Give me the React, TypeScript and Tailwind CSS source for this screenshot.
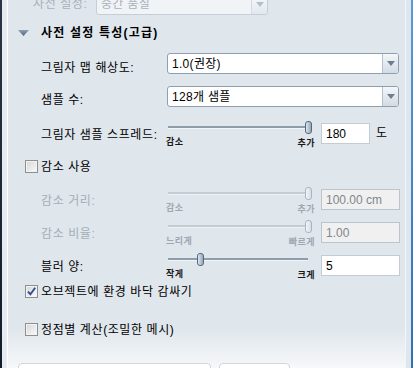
import React from "react";

// Mental ray "advanced preset properties" panel, Korean UI, Vista-ish chrome.

const FONT = "font-['Liberation_Sans','Noto_Sans_CJK_KR',sans-serif]";

function DropButton({ disabled }: { disabled?: boolean }) {
  return (
    <div
      className={
        "flex w-[16px] items-center justify-center rounded-r-[2px] border-l " +
        (disabled
          ? "border-[#d3dae1] bg-gradient-to-b from-[#f6f8fa] to-[#e3e8ed]"
          : "border-[#b3c0cd] bg-gradient-to-b from-[#f5f7f9] to-[#d3dbe3]")
      }
    >
      <svg width="8" height="5" viewBox="0 0 8 5">
        <path d="M0 0h8L4 5z" fill={disabled ? "#b4bfca" : "#6a7e94"} />
      </svg>
    </div>
  );
}

function Combo({ value, disabled, w }: { value: string; disabled?: boolean; w: string }) {
  return (
    <div
      className={
        "flex h-[21px] rounded-[3px] border " +
        w +
        (disabled ? " border-[#c4ced8] bg-[#f1f4f7] text-[#a9b1b9]" : " border-[#8d9fb3] bg-white")
      }
    >
      <div className="flex flex-1 items-center pl-[4px] leading-[14px] tracking-[0.3px]">{value}</div>
      <DropButton disabled={disabled} />
    </div>
  );
}

function Slider({
  pos,
  left,
  right,
  disabled,
}: {
  pos: number;
  left: string;
  right: string;
  disabled?: boolean;
}) {
  const thumbLeft = 2 + pos * 140 - 3.5;
  const tone = disabled ? "text-[#9fa8b0]" : "text-[#1a1a1a]";
  return (
    <div className="relative h-[26px] w-[150px] shrink-0">
      <div
        className={
          "absolute left-[2px] top-[5px] h-[3px] w-[140px] border-t-2 border-b " +
          (disabled ? "border-t-[#c5cdd4] border-b-[#eef2f5]" : "border-t-[#8e9dab] border-b-[#f2f5f7]")
        }
      />
      <div
        className={
          "absolute top-0 h-[13px] w-[7px] rounded-[3px] border " +
          (disabled
            ? "border-[#aab5c0] bg-gradient-to-r from-[#f2f5f7] to-[#d6dde4]"
            : "border-[#56687a] bg-gradient-to-r from-[#dfe8f0] to-[#93a6b9]")
        }
        style={{ left: thumbLeft }}
      />
      <div
        className={
          "absolute left-0 top-[16px] text-[9px] font-semibold leading-[10px] tracking-[0.5px] " + tone
        }
      >
        {left}
      </div>
      <div
        className={
          "absolute right-[1px] top-[17px] text-[9px] font-semibold leading-[10px] tracking-[0.5px] " + tone
        }
      >
        {right}
      </div>
    </div>
  );
}

function Field({ value, w, disabled }: { value: string; w: string; disabled?: boolean }) {
  return (
    <div
      className={
        "mt-[2px] flex h-[21px] items-center pl-[4px] leading-[14px] border " +
        w +
        (disabled ? " border-[#bcc4cc] bg-[#f0f0f0] text-[#7f868c]" : " border-[#c3ccd4] bg-white")
      }
    >
      {value}
    </div>
  );
}

function Check({ checked }: { checked?: boolean }) {
  return (
    <div className="flex h-[13px] w-[13px] shrink-0 items-center justify-center border border-[#8e8f8f] bg-gradient-to-br from-[#d6d6d6] to-[#fbfbfb] shadow-[inset_0_0_0_1px_#f3f3f3]">
      {checked ? (
        <svg width="11" height="11" viewBox="0 0 11 11">
          <path d="M2 5.6l2.4 2.6L9.2 1.8" fill="none" stroke="#2f4f8e" strokeWidth="1.9" />
        </svg>
      ) : null}
    </div>
  );
}

function SliderRow({
  label,
  pos,
  left,
  right,
  value,
  disabled,
  className,
}: {
  label: string;
  pos: number;
  left: string;
  right: string;
  value: string;
  disabled?: boolean;
  className: string;
}) {
  return (
    <div className={"flex h-[26px] " + className}>
      <div
        className={
          "w-[158px] shrink-0 pl-[33px] pt-[7px] leading-[14px] tracking-[0.6px] " +
          (disabled ? "text-[#a6aeb5]" : "")
        }
      >
        {label}
      </div>
      <Slider pos={pos} left={left} right={right} disabled={disabled} />
      <div className="ml-[5px]">
        <Field value={value} w="w-[79px]" disabled={disabled} />
      </div>
    </div>
  );
}

export default function App() {
  return (
    <div className={`flex h-[368px] w-[416px] overflow-hidden text-[12px] text-black ${FONT}`}>
      <div className="w-[2px] bg-gradient-to-b from-[#2b3646] to-[#141c28]" />
      <div className="w-[5px] bg-[#e5ebf0]" />
      <div className="w-[1px] bg-white" />

      <div className="flex w-[397px] flex-col bg-[linear-gradient(to_bottom,#dfe6ec_0%,#dfe6ec_89%,#f6f8fa_100%)] [&>*]:shrink-0">
        {/* preset (disabled, scrolled off top) */}
        <div className="mt-[-6px] flex h-[20px] items-center">
          <div className="w-[88px] pl-[25px] leading-[14px] tracking-[0.6px] text-[#a9b1b9]">사전 설정:</div>
          <Combo value="중간 품질" disabled w="w-[172px]" />
        </div>

        {/* section header */}
        <div className="mt-[10px] flex h-[18px] items-center">
          <div className="flex w-[33px] pl-[10px]">
            <svg width="11" height="6" viewBox="0 0 11 6">
              <defs>
                <linearGradient id="tri" x1="0" y1="0" x2="0" y2="1">
                  <stop offset="0" stopColor="#8ea0b2" />
                  <stop offset="1" stopColor="#50657a" />
                </linearGradient>
              </defs>
              <path d="M0 0h11L5.5 6z" fill="url(#tri)" />
            </svg>
          </div>
          <div className="font-bold leading-[14px] tracking-[1.2px]">사전 설정 특성(고급)</div>
        </div>

        <div className="mt-[11px] flex h-[21px]">
          <div className="w-[159px] shrink-0 pl-[33px] pt-[8px] leading-[14px] tracking-[0.6px]">
            그림자 맵 해상도:
          </div>
          <Combo value="1.0(권장)" w="w-[232px]" />
        </div>

        <div className="mt-[12px] flex h-[21px]">
          <div className="w-[159px] shrink-0 pl-[33px] pt-[7px] leading-[14px] tracking-[0.6px]">샘플 수:</div>
          <Combo value="128개 샘플" w="w-[232px]" />
        </div>

        <div className="mt-[14px] flex h-[26px]">
          <div className="w-[158px] shrink-0 pl-[33px] pt-[7px] leading-[14px] tracking-[0.6px]">
            그림자 샘플 스프레드:
          </div>
          <Slider pos={1} left="감소" right="추가" />
          <div className="ml-[5px]">
            <Field value="180" w="w-[49px]" />
          </div>
          <div className="ml-[6px] pt-[5px] leading-[14px]">도</div>
        </div>

        <div className="ml-[17px] mt-[13px] flex h-[13px] items-center gap-[3px]">
          <Check />
          <span className="leading-[14px] tracking-[0.6px]">감소 사용</span>
        </div>

        <SliderRow className="mt-[14px]" label="감소 거리:" pos={1} left="감소" right="추가" value="100.00 cm" disabled />
        <SliderRow className="mt-[7px]" label="감소 비율:" pos={1} left="느리게" right="빠르게" value="1.00" disabled />
        <SliderRow className="mt-[7px]" label="블러 양:" pos={0.235} left="작게" right="크게" value="5" />

        <div className="ml-[17px] mt-[6px] flex h-[13px] items-center gap-[3px]">
          <Check checked />
          <span className="leading-[14px] tracking-[0.6px]">오브젝트에 환경 바닥 감싸기</span>
        </div>

        <div className="ml-[17px] mt-[25px] flex h-[13px] items-center gap-[3px]">
          <Check />
          <span className="leading-[14px] tracking-[0.6px]">정점별 계산(조밀한 메시)</span>
        </div>

        <div className="mt-[27px] flex h-[12px] gap-[8px] pl-[10px]">
          <div className="w-[193px] rounded-t-[4px] border border-[#cfd6dc] bg-white" />
          <div className="w-[71px] rounded-t-[4px] border border-[#cfd6dc] bg-white" />
        </div>
      </div>

      <div className="w-[1px] bg-[#f3f6f8]" />
      <div className="w-[5px] bg-[#dfe6ec]" />
      <div className="w-[2px] bg-gradient-to-b from-[#5a9ad8] to-[#2e6fb8]" />
      <div className="w-[3px] bg-white" />
    </div>
  );
}
